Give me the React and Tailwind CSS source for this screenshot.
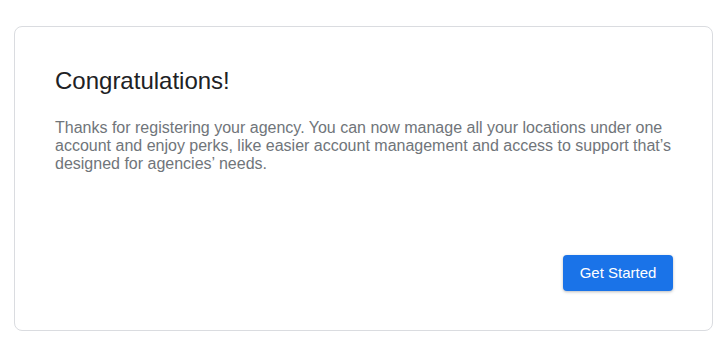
export default function App() {
  return (
    <div className="min-h-screen bg-white pt-[26px] pl-[14px] pr-[12px] font-['Liberation_Sans',Arial,sans-serif]">
      <div className="flex h-[305px] flex-col rounded-lg border border-[#dadce0] bg-white pl-10 pr-[39px] pt-10 pb-[39px]">
        <h1 className="text-[24px] leading-[28px] font-normal text-[#202124]">Congratulations!</h1>
        <p className="mt-6 text-[16px] leading-[18px] text-[#70757a]">
          Thanks for registering your agency. You can now manage all your locations under one
          account and enjoy perks, like easier account management and access to support that’s
          designed for agencies’ needs.
        </p>
        <div className="mt-auto flex justify-end">
          <button className="h-9 w-[110px] rounded bg-[#1a73e8] text-[15px] text-white shadow-[0_1px_3px_rgba(60,64,67,0.35)]">
            Get Started
          </button>
        </div>
      </div>
    </div>
  );
}
